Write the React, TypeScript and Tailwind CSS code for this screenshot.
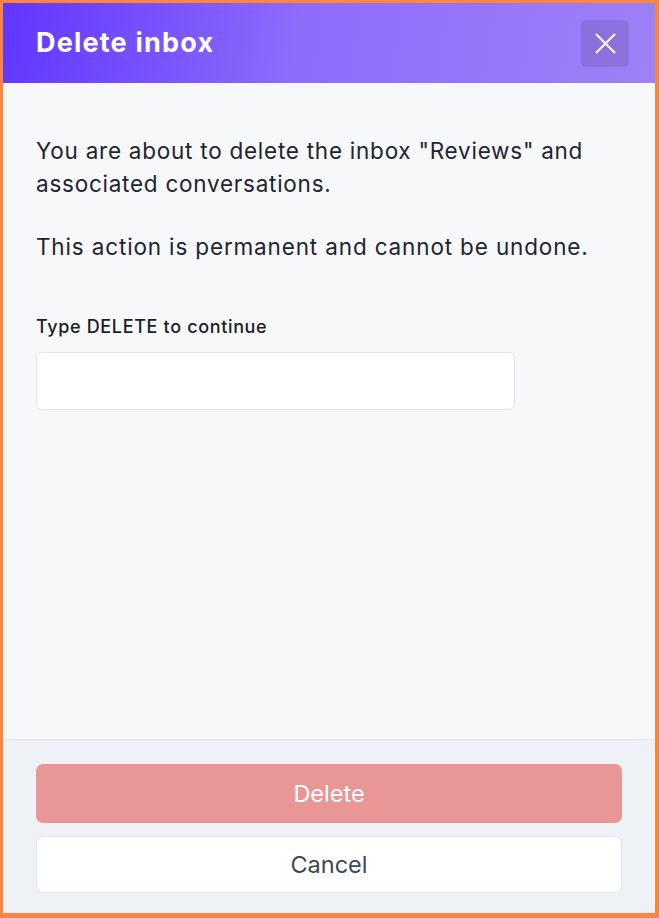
import React from "react";

export default function App() {
  return (
    <div
      className="w-[659px] h-[918px] flex flex-col border-[#f98643] border-t-[3px] border-l-[3px] border-r-[4px] border-b-[5px] bg-[#f7f8fa]"
      style={{ fontFamily: "Inter, 'Noto Sans', sans-serif" }}
    >
      <div className="h-[80px] shrink-0 flex items-center justify-between pl-[33px] pr-[26px] bg-[linear-gradient(100deg,#6236ff_0%,#8d6bfb_45%,#9d81f6_100%)]">
        <h1 className="text-white text-[27px] font-bold tracking-[1.2px]">Delete inbox</h1>
        <button className="w-[48px] h-[47px] rounded-[5px] bg-black/10 flex items-center justify-center">
          <svg width="21" height="21" viewBox="0 0 21 21" fill="none" stroke="white" strokeWidth="2" strokeLinecap="round">
            <path d="M1.5 1.5L19.5 19.5M19.5 1.5L1.5 19.5" />
          </svg>
        </button>
      </div>
      <div className="flex-1 pl-[33px] pr-[26px] pt-[51px]">
        <p className="text-[22.5px] leading-[33px] text-[#1e2330] tracking-[0.75px]">
          You are about to delete the inbox "Reviews" and associated conversations.
        </p>
        <p className="text-[22.5px] leading-[33px] text-[#1e2330] mt-[30px] tracking-[0.85px]">
          This action is permanent and cannot be undone.
        </p>
        <label className="block mt-[52px] text-[18px] font-medium text-[#1a1d24] leading-[24px] tracking-[0.65px]">
          Type DELETE to continue
        </label>
        <input
          type="text"
          className="mt-[13px] w-[479px] h-[58px] rounded-[6px] border border-[#e3e6ec] bg-white outline-none"
        />
      </div>
      <div className="shrink-0 border-t border-[#e2e5ea] bg-[#eef1f5] pl-[33px] pr-[33px] pt-[24px] pb-[20px] flex flex-col gap-[13px]">
        <button className="h-[59px] w-full rounded-[7px] bg-[#e99696] text-white text-[23.5px]">Delete</button>
        <button className="h-[57px] w-full rounded-[7px] bg-white border border-[#e3e6ec] text-[#3d4756] text-[23.5px]">
          Cancel
        </button>
      </div>
    </div>
  );
}
